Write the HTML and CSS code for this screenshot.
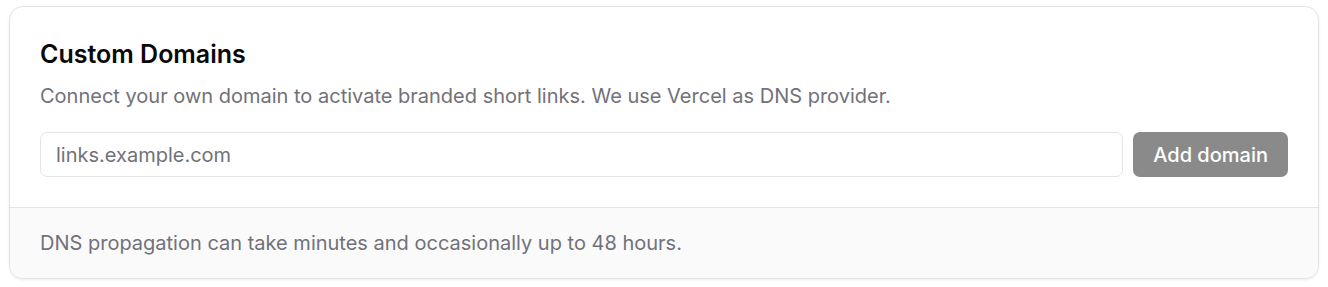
FILE: index.html
```html
<!DOCTYPE html>
<html lang="en">
<head>
<meta charset="utf-8">
<title>Custom Domains</title>
<link rel="stylesheet" href="styles.css">
</head>
<body>
<section class="card">
  <div class="card-body">
    <h2 class="card-title">Custom Domains</h2>
    <p class="card-desc">Connect your own domain to activate branded short links. We use Vercel as DNS provider.</p>
    <form class="domain-form">
      <input class="domain-input" type="text" placeholder="links.example.com">
      <button class="domain-btn" type="button">Add domain</button>
    </form>
  </div>
  <div class="card-footer">
    <p class="footer-text">DNS propagation can take minutes and occasionally up to 48 hours.</p>
  </div>
</section>
</body>
</html>
```
FILE: styles.css
```css
* { box-sizing: border-box; }
html, body { margin: 0; padding: 0; background: #ffffff; }
body {
  font-family: Inter, "Noto Sans", sans-serif;
  padding: 6px 9px 8px 9px;
}
.card {
  border: 1px solid #e4e4e7;
  border-radius: 14px;
  background: #ffffff;
  box-shadow: 0 1px 3px rgba(0,0,0,0.08);
  overflow: hidden;
}
.card-body {
  padding: 30px;
}
.card-title {
  margin: 0;
  font-size: 25px;
  line-height: 35px;
  font-weight: 600;
  color: #09090b;
}
.card-desc {
  margin: 9px 0 0 0;
  font-size: 20px;
  line-height: 30px;
  color: #71717a;
}
.domain-form {
  display: flex;
  gap: 10px;
  margin: 21px 0 0 0;
}
.domain-input {
  flex: 1;
  min-width: 0;
  height: 45px;
  border: 1px solid #e4e4e7;
  border-radius: 7px;
  padding: 0 15px;
  font-family: inherit;
  font-size: 20px;
  color: #09090b;
  background: #ffffff;
  outline: none;
}
.domain-input::placeholder { color: #71717a; }
.domain-btn {
  height: 45px;
  padding: 0 20px;
  border: none;
  border-radius: 7px;
  background: #8a8a8a;
  color: #ffffff;
  font-family: inherit;
  font-size: 20px;
  font-weight: 500;
}
.card-footer {
  border-top: 1px solid #e4e4e7;
  background: #fafafa;
  padding: 20px 30px;
}
.footer-text {
  margin: 0;
  font-size: 20px;
  line-height: 30px;
  color: #71717a;
}
```
